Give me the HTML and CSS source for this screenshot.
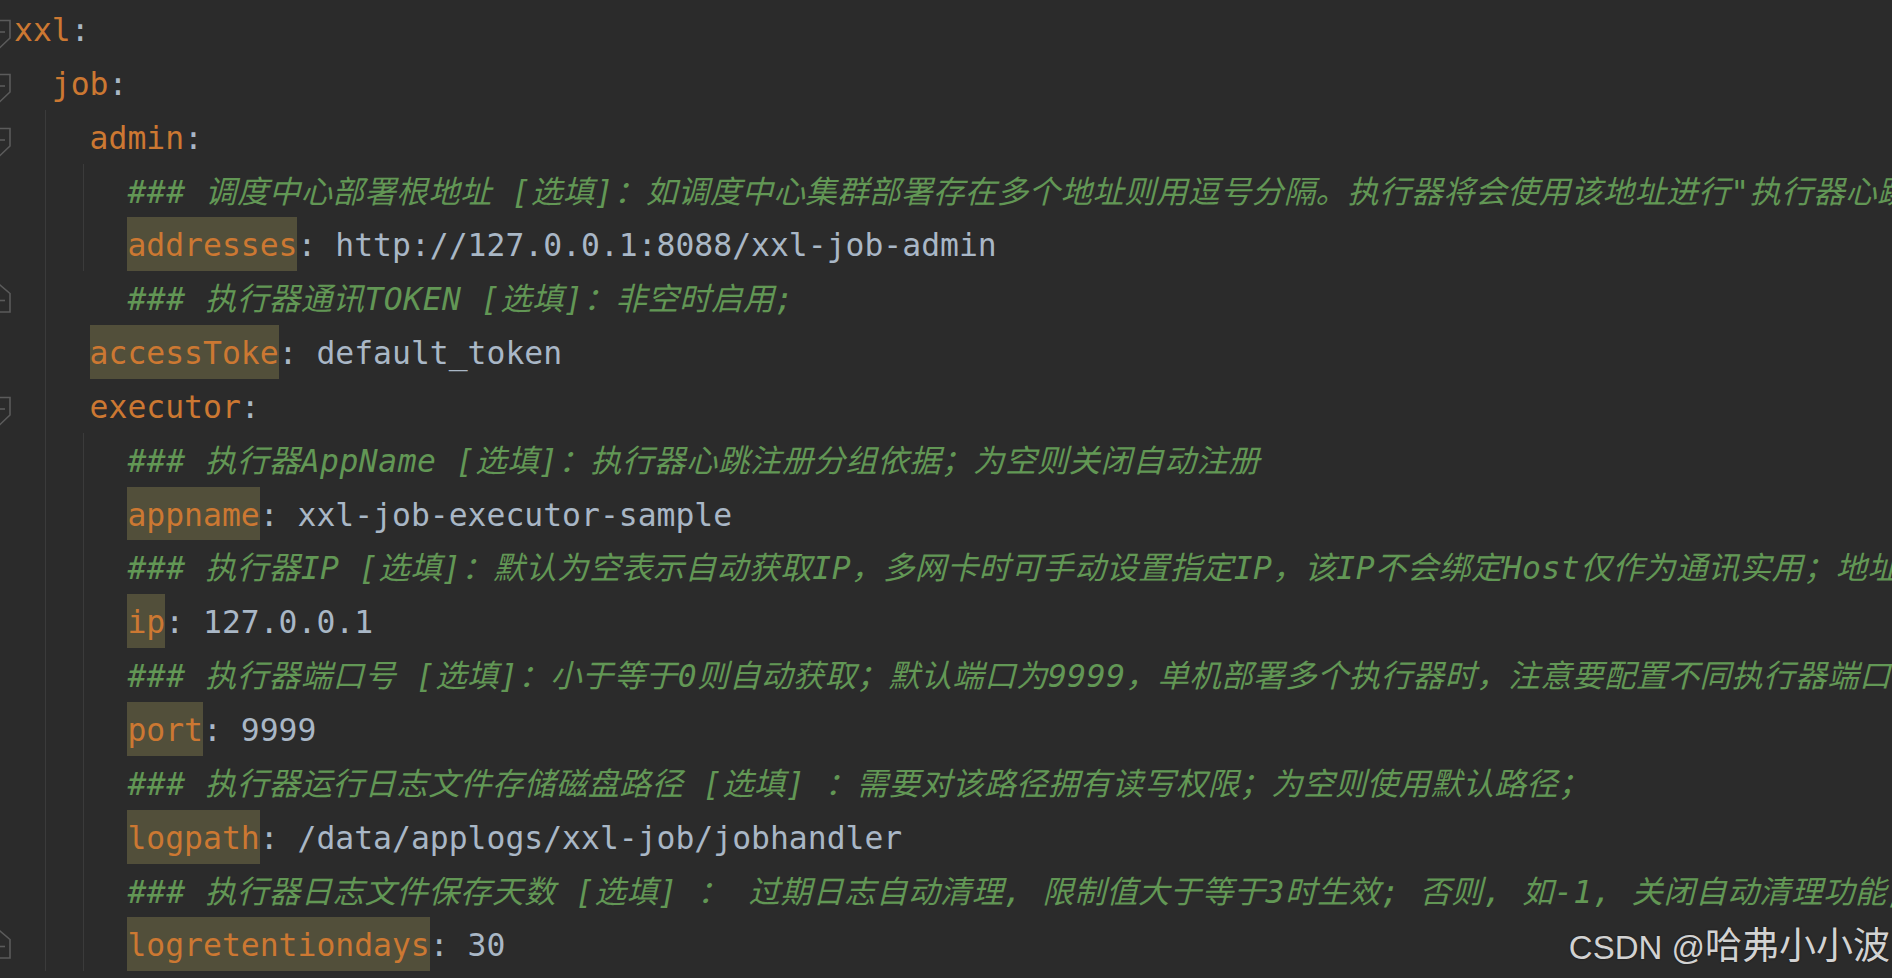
FILE: index.html
```html
<!DOCTYPE html>
<html lang="zh">
<head>
<meta charset="utf-8">
<title>application.yml</title>
<link rel="stylesheet" href="styles.css">
</head>
<body>
<div class="editor">
  <div class="line"><span class="gutter"><svg class="fold" viewBox="0 0 14 54"><path d="M-10 18.5H10V36L0 45.5L-10 36Z"/><path d="M-5 30H5"/></svg></span><span class="code"><span class="k">xxl</span><span class="p">:</span></span></div>
  <div class="line"><span class="gutter"><svg class="fold" viewBox="0 0 14 54"><path d="M-10 18.5H10V36L0 45.5L-10 36Z"/><path d="M-5 30H5"/></svg></span><span class="code"><span class="ind"></span><span class="k">job</span><span class="p">:</span></span></div>
  <div class="line"><span class="gutter"><svg class="fold" viewBox="0 0 14 54"><path d="M-10 18.5H10V36L0 45.5L-10 36Z"/><path d="M-5 30H5"/></svg></span><span class="code"><span class="ind g"></span><span class="ind"></span><span class="k">admin</span><span class="p">:</span></span></div>
  <div class="line"><span class="gutter"></span><span class="code"><span class="ind g"></span><span class="ind g"></span><span class="ind"></span><span class="c">### 调度中心部署根地址 [选填]：如调度中心集群部署存在多个地址则用逗号分隔。执行器将会使用该地址进行"执行器心跳注册"和"任务结果回调"；为空则关闭自动注册；</span></span></div>
  <div class="line"><span class="gutter"></span><span class="code"><span class="ind g"></span><span class="ind g"></span><span class="ind"></span><span class="k hl">addresses</span><span class="p">: </span><span class="v">http://127.0.0.1:8088/xxl-job-admin</span></span></div>
  <div class="line"><span class="gutter"><svg class="fold" viewBox="0 0 14 54"><path d="M-10 22.5L0 14L10 22.5V41H-10Z"/><path d="M-5 29.5H5"/></svg></span><span class="code"><span class="ind g"></span><span class="ind"></span><span class="ind"></span><span class="c">### 执行器通讯TOKEN [选填]：非空时启用;</span></span></div>
  <div class="line"><span class="gutter"></span><span class="code"><span class="ind g"></span><span class="ind"></span><span class="k hl">accessToke</span><span class="p">: </span><span class="v">default_token</span></span></div>
  <div class="line"><span class="gutter"><svg class="fold" viewBox="0 0 14 54"><path d="M-10 18.5H10V36L0 45.5L-10 36Z"/><path d="M-5 30H5"/></svg></span><span class="code"><span class="ind g"></span><span class="ind"></span><span class="k">executor</span><span class="p">:</span></span></div>
  <div class="line"><span class="gutter"></span><span class="code"><span class="ind g"></span><span class="ind g"></span><span class="ind"></span><span class="c">### 执行器AppName [选填]：执行器心跳注册分组依据；为空则关闭自动注册</span></span></div>
  <div class="line"><span class="gutter"></span><span class="code"><span class="ind g"></span><span class="ind g"></span><span class="ind"></span><span class="k hl">appname</span><span class="p">: </span><span class="v">xxl-job-executor-sample</span></span></div>
  <div class="line"><span class="gutter"></span><span class="code"><span class="ind g"></span><span class="ind g"></span><span class="ind"></span><span class="c">### 执行器IP [选填]：默认为空表示自动获取IP，多网卡时可手动设置指定IP，该IP不会绑定Host仅作为通讯实用；地址信息用于 "执行器注册" 和 "调度中心请求并触发任务"；</span></span></div>
  <div class="line"><span class="gutter"></span><span class="code"><span class="ind g"></span><span class="ind g"></span><span class="ind"></span><span class="k hl">ip</span><span class="p">: </span><span class="v">127.0.0.1</span></span></div>
  <div class="line"><span class="gutter"></span><span class="code"><span class="ind g"></span><span class="ind g"></span><span class="ind"></span><span class="c">### 执行器端口号 [选填]：小于等于0则自动获取；默认端口为9999，单机部署多个执行器时，注意要配置不同执行器端口；</span></span></div>
  <div class="line"><span class="gutter"></span><span class="code"><span class="ind g"></span><span class="ind g"></span><span class="ind"></span><span class="k hl">port</span><span class="p">: </span><span class="v">9999</span></span></div>
  <div class="line"><span class="gutter"></span><span class="code"><span class="ind g"></span><span class="ind g"></span><span class="ind"></span><span class="c">### 执行器运行日志文件存储磁盘路径 [选填] ：需要对该路径拥有读写权限；为空则使用默认路径；</span></span></div>
  <div class="line"><span class="gutter"></span><span class="code"><span class="ind g"></span><span class="ind g"></span><span class="ind"></span><span class="k hl">logpath</span><span class="p">: </span><span class="v">/data/applogs/xxl-job/jobhandler</span></span></div>
  <div class="line"><span class="gutter"></span><span class="code"><span class="ind g"></span><span class="ind g"></span><span class="ind"></span><span class="c">### 执行器日志文件保存天数 [选填] ： 过期日志自动清理, 限制值大于等于3时生效; 否则, 如-1, 关闭自动清理功能;</span></span></div>
  <div class="line"><span class="gutter"><svg class="fold" viewBox="0 0 14 54"><path d="M-10 22.5L0 14L10 22.5V41H-10Z"/><path d="M-5 29.5H5"/></svg></span><span class="code"><span class="ind g"></span><span class="ind g"></span><span class="ind"></span><span class="k hl">logretentiondays</span><span class="p">: </span><span class="v">30</span></span></div>
</div>
<div class="watermark">CSDN @<span class="wm-cjk">哈弗小小波</span></div>
</body>
</html>
```
FILE: styles.css
```css
html, body {
  margin: 0;
  padding: 0;
  background: #2b2b2b;
  width: 1892px;
  height: 978px;
  overflow: hidden;
}

body {
  position: relative;
  font-family: "DejaVu Sans Mono", "Noto Sans CJK SC", monospace;
  font-size: 31.4px;
}

.editor {
  padding-top: 2px;
  display: flex;
  flex-direction: column;
}

.line {
  display: flex;
  height: 53.85px;
}

.gutter {
  flex: none;
  width: 14px;
  height: 53.85px;
  overflow: hidden;
}

.fold {
  display: block;
  width: 14px;
  height: 54px;
  fill: none;
  stroke: #5b5b5b;
  stroke-width: 1.6;
}

.code {
  flex: none;
  box-sizing: border-box;
  height: 53.85px;
  padding-top: 3px;
  white-space: pre;
  line-height: 50.85px;
  color: #a9b7c6;
}

.ind {
  display: inline-block;
  width: 2ch;
  height: 53.85px;
  margin-top: -3px;
  vertical-align: top;
}

.ind.g {
  background: linear-gradient(#3b3b3b, #3b3b3b) no-repeat;
  background-size: 1px 100%;
  background-position: calc(100% - 6px) 0;
}

.k {
  color: #cc7832;
}

.hl {
  display: inline-block;
  box-sizing: border-box;
  height: 53.85px;
  margin-top: -3px;
  padding-top: 3px;
  vertical-align: top;
  background: #524f3a;
}

.p {
  color: #a9b7c6;
}

.v {
  color: #a9b7c6;
}

.c {
  color: #629755;
  font-style: italic;
  letter-spacing: 0.5px;
}

.watermark {
  position: absolute;
  top: 926px;
  right: 2px;
  font-family: "Liberation Sans", "Noto Sans CJK SC", sans-serif;
  font-size: 33px;
  line-height: 34px;
  color: #d2d2d2;
  text-shadow: 0 0 2px rgba(0, 0, 0, 0.5);
  white-space: nowrap;
}

.wm-cjk {
  font-family: "Noto Sans CJK SC", sans-serif;
  font-size: 37px;
}
```
